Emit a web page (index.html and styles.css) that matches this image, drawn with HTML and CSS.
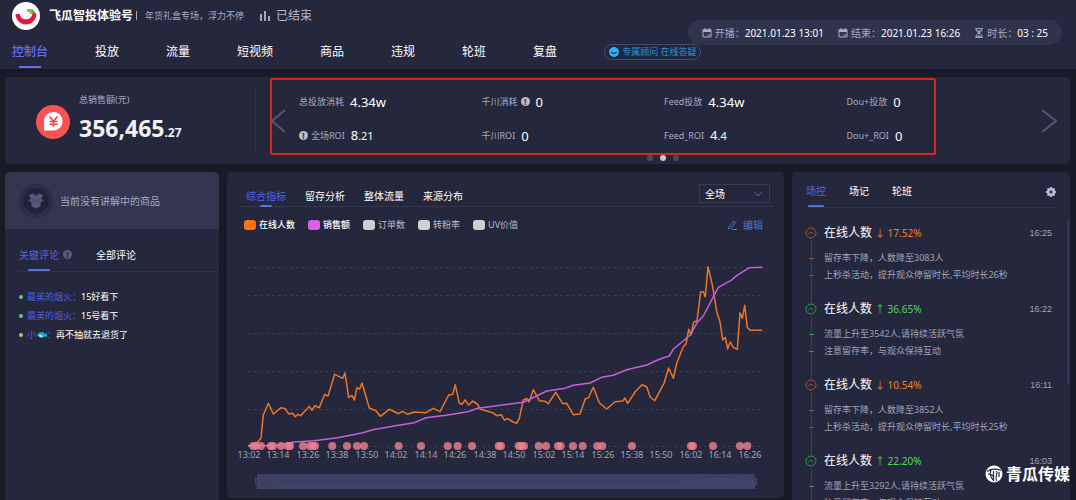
FILE: index.html
```html
<!DOCTYPE html>
<html lang="zh-CN">
<head>
<meta charset="utf-8">
<meta name="viewport" content="width=device-width, initial-scale=1">
<title>飞瓜智投体验号</title>
<link rel="stylesheet" href="styles.css">
</head>
<body>
<header class="header">
  <div class="brand">
    <svg class="logo" viewBox="0 0 28 28" aria-hidden="true">
      <circle cx="14" cy="14" r="14" fill="#fff"/>
      <path d="M3.500 12h4.200c1 4 3.400 5.300 6.300 5.300s5.300-1.300 6.300-5.300h4.200c-.4 6.300-4.700 10.500-10.500 10.500S3.900 18.300 3.500 12z" fill="#e5173f"/>
      <path d="M15 7h5.500l1.200 1.500V12H18c0-1.500-1-2.200-3-2.200z" fill="#86c440"/>
      <path d="M20.500 8l4 4h-4z" fill="#35963c"/>
    </svg>
    <h1 class="brand-name">飞瓜智投体验号</h1>
    <span class="brand-rule"></span>
    <span class="brand-sub">年货礼盒专场，浮力不停</span>
    <svg class="bars" viewBox="0 0 10 10" aria-hidden="true"><path d="M1 3v7M5 0v10M9 5v5" stroke="#b4b6cb" stroke-width="1.800"/></svg>
    <span class="status">已结束</span>
  </div>
  <nav class="nav">
    <a class="nav-link is-active" href="#">控制台</a>
    <a class="nav-link" href="#">投放</a>
    <a class="nav-link" href="#">流量</a>
    <a class="nav-link" href="#">短视频</a>
    <a class="nav-link" href="#">商品</a>
    <a class="nav-link" href="#">违规</a>
    <a class="nav-link" href="#">轮班</a>
    <a class="nav-link" href="#">复盘</a>
    <button class="advisor" type="button">
      <svg class="advisor-icon" viewBox="0 0 10 10" aria-hidden="true"><circle cx="5" cy="5" r="5" fill="#35aef2"/><path d="M2.500 5q2.500 3 5 0" fill="none" stroke="#17395e" stroke-width="1.200"/></svg>
      专属顾问 在线答疑
    </button>
  </nav>
  <div class="session">
    <span class="session-item">
      <svg class="mini" viewBox="0 0 10 10" aria-hidden="true"><path d="M1 4v5h8V4M2.800 0v2M7.200 0v2M5.500 7H8" fill="none" stroke="#a9abc4"/><path d="M.5 1.200h9v2.800h-9z" fill="#a9abc4"/></svg>
      <span>开播：</span><time class="session-value">2021.01.23 13:01</time>
    </span>
    <span class="session-item">
      <svg class="mini" viewBox="0 0 10 10" aria-hidden="true"><path d="M1 4v5h8V4M2.800 0v2M7.200 0v2M5.500 7H8" fill="none" stroke="#a9abc4"/><path d="M.5 1.200h9v2.800h-9z" fill="#a9abc4"/></svg>
      <span>结束：</span><time class="session-value">2021.01.23 16:26</time>
    </span>
    <span class="session-item">
      <svg class="mini" viewBox="0 0 10 10" aria-hidden="true"><path d="M1 .6h8M1 9.400h8M2.300 1v2L5 5l2.700-2V1M2.300 9V7L5 5l2.700 2v2" fill="none" stroke="#a9abc4"/><path d="M3 2.500h4L5 4.500zM3 9l2-2 2 2z" fill="#a9abc4"/></svg>
      <span>时长：</span><span class="session-value">03 : 25</span>
    </span>
  </div>
</header>

<section class="hero">
  <div class="sales">
    <svg class="coin" viewBox="0 0 34 34" aria-hidden="true">
      <circle cx="17" cy="17" r="17" fill="#fb5153"/>
      <path d="M8 25.500V17a9.300 9.300 0 1 1 9.300 8.500z" fill="#fff"/>
      <path d="M13.500 11.500l4 4.800 4-4.800M17.500 16v6M13.500 16.500h8M13.500 19.200h8" fill="none" stroke="#e8474a" stroke-width="1.500"/>
    </svg>
    <div>
      <div class="sales-label">总销售额(元)</div>
      <div class="sales-value">356,465<span class="sales-cents">.27</span></div>
    </div>
  </div>
  <div class="carousel">
    <button class="arrow" type="button" aria-label="上一页"><svg viewBox="0 0 16 24"><path d="M14 1L1 12l13 11"/></svg></button>
    <dl class="metrics">
      <div class="metric"><dt>总投放消耗</dt><dd>4.34w</dd></div>
      <div class="metric"><dt>千川消耗 <i class="info">!</i></dt><dd>0</dd></div>
      <div class="metric"><dt>Feed投放</dt><dd>4.34w</dd></div>
      <div class="metric"><dt>Dou+投放</dt><dd>0</dd></div>
      <div class="metric"><dt><i class="info">!</i> 全场ROI</dt><dd>8<small>.21</small></dd></div>
      <div class="metric"><dt>千川ROI</dt><dd>0</dd></div>
      <div class="metric"><dt>Feed_ROI</dt><dd>4<small>.4</small></dd></div>
      <div class="metric"><dt>Dou+_ROI</dt><dd>0</dd></div>
    </dl>
    <button class="arrow" type="button" aria-label="下一页"><svg viewBox="0 0 16 24"><path d="M1 1l14 11L1 23"/></svg></button>
    <div class="highlight"></div>
    <div class="dots"><span></span><span class="is-on"></span><span></span></div>
  </div>
</section>

<main class="main">
  <section class="panel comments">
    <div class="product">
      <svg class="product-icon" viewBox="0 0 34 34" aria-hidden="true">
        <circle cx="17" cy="17" r="17" fill="#2b2d42"/><circle cx="17" cy="17" r="12.500" fill="#1f2134"/>
        <path d="M9.500 11l5-1.500L17 12l2.500-2.500 5 1.500L22 14.500l3 2-3.500 2v4L17 24.500l-4.500-2v-4l-3.500-2 3-2z" fill="#55587a"/>
        <path d="M12 14.500l5 2 5-2M12.500 18.500l4.500-2 4.500 2" fill="none" stroke="#454869"/>
      </svg>
      <span>当前没有讲解中的商品</span>
    </div>
    <div class="comment-tabs">
      <button class="tab is-active" type="button">关键评论</button><i class="info is-dim">!</i>
      <button class="tab tab-all" type="button">全部评论</button>
    </div>
    <ul class="comment-list">
      <li><b class="user">最美的烟火：</b><span>15好看下</span></li>
      <li><b class="user">最美的烟火：</b><span>15号看下</span></li>
      <li class="is-gold"><b class="user">小<svg class="fish" viewBox="0 0 10 8" aria-hidden="true"><path d="M0 4Q3 0 6.500 1.500L8 3l2-1v4L8 5.500Q4 9 0 4z" fill="#19a9dc"/><path d="M1 4.500q2.500 2.500 5 .5l-2-1z" fill="#c2f0fb"/></svg>：</b><span>再不抽就去退货了</span></li>
    </ul>
  </section>

  <section class="panel trend">
    <div class="trend-head">
      <div class="trend-tabs">
        <button class="tab is-active" type="button">综合指标</button>
        <button class="tab" type="button">留存分析</button>
        <button class="tab" type="button">整体流量</button>
        <button class="tab" type="button">来源分布</button>
      </div>
      <select class="range" aria-label="时段"><option>全场</option></select>
    </div>
    <div class="legend">
      <span class="key is-orange">在线人数</span>
      <span class="key is-purple">销售额</span>
      <span class="key">订单数</span>
      <span class="key">转粉率</span>
      <span class="key">UV价值</span>
      <button class="edit" type="button"><svg viewBox="0 0 10 10" aria-hidden="true"><path d="M1.500 7.500L6.800 1.200l1.800 1.500L3.500 8.500l-2.300.3zM5 9.500h5" fill="none" stroke="#4577d6"/></svg>编辑</button>
    </div>
    <svg class="chart" viewBox="238 240 536 252" role="img" aria-label="在线人数与销售额走势">
      <path class="grid" d="M248 267.500h514M248 295.500h514M248 333.500h514M248 371.500h514M248 409.500h514M248 446.500h514"/>
      <polyline class="line is-online" points="248,446 257.7,442 261,438.3 263.3,415 268.3,403.3 273.3,414 281,407.7 285.3,408.7 288.7,414 292.7,413.3 295.3,416.7 298,414.3 300.7,415.7 309.3,406.3 312,410.3 314.7,405.7 319.3,407.7 324.7,394.3 328,396 334.7,374.3 342.7,378.3 345,373 348.7,397.3 352,395.3 354.3,400 357,387.7 359.7,389 362,383 369.3,408 376,410.7 380.3,416.3 389.3,409.3 398.7,413.7 402.7,411.3 407.7,414.3 414.3,412 426,412.7 433.3,408.3 440,411.7 448.7,395 452.7,394.3 455.3,384.7 459.3,403.3 462,404.3 465,400 468.7,405 472.7,401 477.7,404.3 480,409 492.7,412.7 496.7,415.7 501.3,414.7 504.3,420 507.7,418.7 513,422 516.7,423.3 519.3,418.3 523.3,400 526.7,398.3 529,402 533.3,389.7 539.3,400.7 545,401.3 548.3,403.7 555.7,392.3 562.7,403.7 566.7,403.3 573.3,414.7 580,414 585.3,398.7 588.3,398 593.3,387.3 599.3,402.7 606.7,409 615,401.7 622.7,401 625,398 627.7,403.3 635,392 642,384.7 646.7,386.7 650,396.7 654.7,400.7 664,383.3 668.7,368 673.3,378.3 676.7,363.3 683.3,346.7 686,344 688.7,329.3 691,335 693.7,322 697,321 700.7,291.7 703.3,291.7 705.3,296.7 708,266.7 712.7,286.7 716.7,311.7 720,321.7 722.7,340 725.3,337.3 727.7,349 730.3,342 733.3,347.3 737.3,349.3 740,312.7 742.3,318.3 744.7,305.3 747.3,327.3 750,330.3 762.3,330.3"/>
      <polyline class="line is-sales" points="248,446 276,445.5 294,442 314,440.7 337.7,437.7 362.7,432.7 372.7,429.7 392.7,426.3 414,422.7 426,417.7 446,415.3 467.7,411.7 477.7,408.3 516,403.3 523.3,402.3 535,396.7 546.7,391 565,388.3 573.3,385.3 590,383 601.7,377.3 613.3,375.3 626.7,369.7 646.7,365 660,359 669.3,356 673.3,349.3 690,335.3 696.7,323.3 703.3,316 718.3,287.3 730.7,280.7 736.7,275.7 749.3,267.7 762.3,267.3"/>
      <g class="marks">
        <circle cx="253.3" cy="446" r="4"/><circle cx="256" cy="446" r="4"/><circle cx="261" cy="446" r="4"/><circle cx="270.7" cy="446" r="4"/><circle cx="273" cy="446" r="4"/><circle cx="281" cy="446" r="4"/><circle cx="288" cy="446" r="4"/><circle cx="290" cy="446" r="4"/><circle cx="303" cy="446" r="4"/><circle cx="310" cy="446" r="4"/><circle cx="312.7" cy="446" r="4"/><circle cx="315" cy="446" r="4"/><circle cx="332.3" cy="446" r="4"/><circle cx="347" cy="446" r="4"/><circle cx="357" cy="446" r="4"/><circle cx="364" cy="446" r="4"/><circle cx="398.7" cy="446" r="4"/><circle cx="421" cy="446" r="4"/><circle cx="447.7" cy="446" r="4"/><circle cx="457.7" cy="446" r="4"/><circle cx="472" cy="446" r="4"/><circle cx="498.7" cy="446" r="4"/><circle cx="501" cy="446" r="4"/><circle cx="518.7" cy="446" r="4"/><circle cx="521.3" cy="446" r="4"/><circle cx="524" cy="446" r="4"/><circle cx="538.7" cy="446" r="4"/><circle cx="546" cy="446" r="4"/><circle cx="558" cy="446" r="4"/><circle cx="560.7" cy="446" r="4"/><circle cx="573" cy="446" r="4"/><circle cx="582.7" cy="446" r="4"/><circle cx="597.3" cy="446" r="4"/><circle cx="602.3" cy="446" r="4"/><circle cx="632" cy="446" r="4"/><circle cx="691" cy="446" r="4"/><circle cx="693" cy="446" r="4"/><circle cx="713" cy="446" r="4"/><circle cx="740" cy="446" r="4"/><circle cx="747.3" cy="446" r="4"/>
      </g>
      <g class="axis">
        <text x="249" y="458">13:02</text><text x="278" y="458">13:14</text><text x="308" y="458">13:26</text><text x="337" y="458">13:38</text><text x="367" y="458">13:50</text><text x="396" y="458">14:02</text><text x="426" y="458">14:14</text><text x="455" y="458">14:26</text><text x="485" y="458">14:38</text><text x="514" y="458">14:50</text><text x="544" y="458">15:02</text><text x="573" y="458">15:14</text><text x="603" y="458">15:26</text><text x="632" y="458">15:38</text><text x="661" y="458">15:50</text><text x="691" y="458">16:02</text><text x="720" y="458">16:14</text><text x="750" y="458">16:26</text>
      </g>
      <rect x="257" y="474" width="498" height="15" fill="#3c4064"/>
      <path d="M257 487q90-2 150-2t180 0 90-4l40-4 38 4v8H257z" fill="#3f446b"/>
      <path d="M255.500 478h3v6l-1.500 2-1.500-2zM753.500 478h3v6l-1.500 2-1.500-2z" fill="#343858" stroke="#50557d" stroke-width=".6"/>
    </svg>
  </section>

  <section class="panel control">
    <div class="control-tabs">
      <button class="tab is-active" type="button">场控</button>
      <button class="tab" type="button">场记</button>
      <button class="tab" type="button">轮班</button>
      <button class="gear" type="button" aria-label="设置"><svg viewBox="0 0 10 10"><circle cx="5" cy="5" r="2.800" fill="none" stroke="#b9bbd6" stroke-width="2.600"/><path d="M5 0v2M5 8v2M0 5h2M8 5h2M1.500 1.500l1.400 1.400M7.100 7.100l1.400 1.400M1.500 8.500l1.400-1.400M7.100 2.900l1.400-1.400" stroke="#b9bbd6" stroke-width="1.800"/></svg></button>
    </div>
    <ol class="events">
      <li class="event is-down">
        <h3 class="event-head"><svg class="bullet" viewBox="0 0 12 12" aria-hidden="true"><circle cx="6" cy="6" r="5"/><path d="M3.500 7L6 5l2.500 2"/></svg>在线人数<span class="delta">↓ 17.52%</span><time>16:25</time></h3>
        <p>留存率下降，人数降至3083人</p><p>上秒杀活动，提升观众停留时长,平均时长26秒</p>
      </li>
      <li class="event is-up">
        <h3 class="event-head"><svg class="bullet" viewBox="0 0 12 12" aria-hidden="true"><circle cx="6" cy="6" r="5"/><path d="M3.500 7L6 5l2.500 2"/></svg>在线人数<span class="delta">↑ 36.65%</span><time>16:22</time></h3>
        <p>流量上升至3542人,请持续活跃气氛</p><p class="is-muted">注意留存率，与观众保持互动</p>
      </li>
      <li class="event is-down">
        <h3 class="event-head"><svg class="bullet" viewBox="0 0 12 12" aria-hidden="true"><circle cx="6" cy="6" r="5"/><path d="M3.500 7L6 5l2.500 2"/></svg>在线人数<span class="delta">↓ 10.54%</span><time>16:11</time></h3>
        <p>留存率下降，人数降至3852人</p><p>上秒杀活动，提升观众停留时长,平均时长25秒</p>
      </li>
      <li class="event is-up">
        <h3 class="event-head"><svg class="bullet" viewBox="0 0 12 12" aria-hidden="true"><circle cx="6" cy="6" r="5"/><path d="M3.500 7L6 5l2.500 2"/></svg>在线人数<span class="delta">↑ 22.20%</span><time>16:03</time></h3>
        <p>流量上升至3292人,请持续活跃气氛</p><p class="is-muted">注意留存率，与观众保持互动</p>
      </li>
    </ol>
    <span class="scrollbar"></span>
  </section>
</main>

<div class="watermark">
  <svg viewBox="0 0 18 18" aria-hidden="true"><circle cx="9" cy="9" r="8.500" fill="#fff"/><path d="M2 6.500q6-4 14-1M6 5q-2 5 2 10M8.500 6v10M11.500 6q1 2 0 4t0 6M3 9q4 0 6 3M14 7v5" fill="none" stroke="#25283c" stroke-width="1.200"/></svg>
  青瓜传媒
</div>
</body>
</html>
```
FILE: styles.css
```css
* { box-sizing: border-box; }

body {
  margin: 0;
  height: 100vh;
  display: flex;
  flex-direction: column;
  gap: 8px;
  overflow: hidden;
  position: relative;
  background: #181a27;
  color: #fff;
  font: 10px/16px "Noto Sans", "Noto Sans CJK SC", sans-serif;
}

button, select {
  margin: 0;
  padding: 0;
  border: 0;
  background: none;
  color: inherit;
  font: inherit;
}

h1, h3, p, ul, ol, dl, dd { margin: 0; padding: 0; }
ul, ol { list-style: none; }
svg { display: block; flex: none; }

/* Header */
.header {
  position: relative;
  flex: none;
  height: 69px;
  display: flex;
  flex-direction: column;
  justify-content: space-between;
  background: #25283c;
}
.brand { display: flex; align-items: center; padding: 1px 0 0 12px; height: 30px; }
.logo { width: 28px; height: 28px; }
.brand-name { margin-left: 9px; font-size: 12px; font-weight: 700; }
.brand-rule { width: 1px; height: 9px; margin: 0 8px 0 3px; background: #a9abc4; }
.brand-sub { font-size: 9px; color: #a9abc4; }
.bars { width: 10px; height: 10px; margin: 0 6px 0 16px; }
.status { font-size: 12px; color: #b4b6cb; }

.nav { display: flex; gap: 47px; padding-left: 12px; height: 34px; align-items: flex-start; }
.nav-link {
  position: relative;
  height: 34px;
  line-height: 34px;
  font-size: 12px;
  color: #fff;
  text-decoration: none;
}
.nav-link.is-active { color: #666cf0; font-weight: 500; }
.nav-link.is-active::after {
  content: "";
  position: absolute;
  left: 7px;
  right: 7px;
  bottom: 1px;
  height: 2px;
  background: #666cf0;
}
.advisor {
  display: flex;
  align-items: center;
  gap: 3px;
  margin-top: 9px;
  height: 16px;
  padding: 0 4px;
  border: 1px solid #484c66;
  border-radius: 8px;
  background: #1c2740;
  color: #358fd0;
  font-size: 9px;
  white-space: nowrap;
}
.advisor-icon { width: 10px; height: 10px; }

.session {
  position: absolute;
  top: 20px;
  right: 14px;
  height: 25px;
  display: flex;
  align-items: center;
  gap: 14px;
  padding: 0 14px;
  border-radius: 13px;
  background: #30334c;
  color: #a9abc4;
  font-size: 10px;
}
.session-item { display: flex; align-items: center; white-space: nowrap; }
.mini { width: 10px; height: 10px; margin-right: 3px; }
.session-value { color: #fff; }

/* Overview strip */
.hero {
  flex: none;
  display: flex;
  height: 87px;
  margin: 0 6px 0 5px;
  border-radius: 5px;
  background: #25283c;
}
.sales {
  flex: none;
  width: 251px;
  display: flex;
  gap: 9px;
  padding: 15px 0 0 31px;
  background: linear-gradient(#2e3147, #2e3147) right center / 1px 64px no-repeat;
}
.coin { width: 34px; height: 34px; margin-top: 13px; }
.sales-label { font-size: 9px; color: #a9abc4; }
.sales-value { margin-top: 6px; font-size: 23px; line-height: 28px; font-weight: 700; color: #f0f0f5; }
.sales-cents { font-size: 12px; }

.carousel {
  position: relative;
  flex: 1;
  display: flex;
  align-items: center;
  gap: 12px;
  padding: 0 13px 0 15px;
}
.arrow svg { width: 16px; height: 24px; fill: none; stroke: #555870; stroke-width: 2; }
.metrics {
  flex: 1;
  display: grid;
  grid-template-columns: repeat(4, 1fr);
  row-gap: 14px;
  padding-bottom: 4px;
}
.metric { display: flex; align-items: center; gap: 6px; height: 20px; }
.metric dt { display: flex; align-items: center; gap: 3px; font-size: 9px; color: #a9abc4; }
.metric dd { font-size: 13px; line-height: 20px; }
.metric small { font-size: 11px; }

.info {
  width: 9px;
  height: 9px;
  border-radius: 50%;
  background: #b9bbd0;
  color: #25283c;
  font: 700 8px/9px "Noto Sans", sans-serif;
  text-align: center;
}
.info.is-dim { background: #565978; }

.highlight {
  position: absolute;
  top: 1px;
  left: 14px;
  right: 134px;
  height: 77px;
  border: 2px solid #d9251f;
  border-radius: 2px;
  pointer-events: none;
}
.dots {
  position: absolute;
  left: 0;
  right: 0;
  bottom: 3px;
  display: flex;
  justify-content: center;
  gap: 7px;
}
.dots span { width: 6px; height: 6px; border-radius: 50%; background: #484b62; }
.dots .is-on { background: #c6c8d8; }

/* Columns */
.main {
  flex: 1;
  min-height: 0;
  display: grid;
  grid-template-columns: 214px minmax(0, 1fr) 278px;
  grid-template-rows: minmax(0, 1fr);
  gap: 8px;
  margin: 0 6px 0 5px;
}
.panel { border-radius: 5px 5px 0 0; background: #25283c; overflow: hidden; }
.tab { position: relative; white-space: nowrap; }
.tab.is-active { color: #5561e8; }
.tab.is-active::after {
  content: "";
  position: absolute;
  height: 2px;
  bottom: 0;
  border-radius: 1px;
  background: #5270e8;
}

/* Comments */
.product {
  display: flex;
  align-items: center;
  gap: 7px;
  height: 57px;
  padding-left: 14px;
  background: #33364e;
  color: #a9abc4;
}
.product-icon { width: 34px; height: 34px; }
.comment-tabs {
  display: flex;
  align-items: center;
  height: 43px;
  margin-left: 14px;
  padding-top: 9px;
  border-bottom: 1px solid #2f3248;
}
.comment-tabs .tab { height: 33px; line-height: 34px; }
.comment-tabs .tab.is-active::after { left: 9px; right: 9px; }
.comment-tabs .info { margin-left: 4px; }
.comment-tabs .tab-all { margin-left: 24px; }
.comment-list { padding: 15px 0 0 14px; font-size: 9px; }
.comment-list li { display: flex; align-items: center; height: 19px; }
.comment-list li::before {
  content: "";
  width: 4px;
  height: 4px;
  margin-right: 4px;
  border-radius: 50%;
  background: #62c4a0;
}
.comment-list .is-gold::before { background: #e0b36a; }
.user { display: flex; align-items: center; font-weight: 400; color: #4f5ce6; }
.fish { width: 10px; height: 8px; margin-left: 1px; }

/* Trend */
.trend { padding: 12px 10px 0 11px; margin-bottom: 2px; border-radius: 5px; }
.trend-head {
  display: flex;
  justify-content: space-between;
  align-items: flex-start;
  height: 23px;
  padding: 0 4px 0 8px;
  border-bottom: 1px solid #33364d;
}
.trend-tabs { display: flex; gap: 19px; }
.trend-tabs .tab { height: 23px; line-height: 22px; }
.trend-tabs .tab.is-active::after { left: 14px; right: 14px; }
.range {
  appearance: none;
  width: 71px;
  height: 19px;
  padding: 0 5px;
  border: 1px solid #383b52;
  color: #fff;
  background: url("data:image/svg+xml,%3Csvg xmlns='http://www.w3.org/2000/svg' viewBox='0 0 8 6'%3E%3Cpath d='M0 .5l4 4.500 4-4.500' fill='none' stroke='%23666980'/%3E%3C/svg%3E") right 7px center / 8px 6px no-repeat;
}
.legend { display: flex; align-items: center; gap: 13px; height: 33px; padding: 3px 11px 0 6px; font-size: 9px; color: #b9bbcc; }
.key { display: flex; align-items: center; gap: 3px; white-space: nowrap; }
.key::before { content: ""; width: 12px; height: 10px; border-radius: 3px; background: #cfcfcf; }
.key.is-orange, .key.is-purple { color: #fff; font-weight: 500; }
.key.is-orange::before { background: #ff7315; }
.key.is-purple::before { background: #d95fe6; }
.edit { display: flex; align-items: center; gap: 6px; margin-left: auto; font-size: 10px; color: #4577d6; }
.edit svg { width: 10px; height: 10px; }
.chart { width: 100%; height: auto; }
.grid { stroke: #383b50; stroke-dasharray: 3 3; fill: none; }
.line { fill: none; stroke-width: 1.5; stroke-linejoin: round; }
.line.is-online { stroke: #ee7526; }
.line.is-sales { stroke: #c65fd8; }
.marks { fill: #f08090; fill-opacity: .8; }
.axis { fill: #a3a5b8; font-size: 9px; text-anchor: middle; }

/* Control feed */
.control { position: relative; display: flex; flex-direction: column; }
.control-tabs {
  flex: none;
  display: flex;
  align-items: center;
  gap: 23px;
  height: 36px;
  margin: 0 14px;
  padding-top: 4px;
  border-bottom: 1px solid #2f3248;
}
.control-tabs .tab { height: 31px; line-height: 31px; }
.control-tabs .tab.is-active::after { left: 2px; right: 2px; }
.gear { margin-left: auto; }
.gear svg { width: 10px; height: 10px; }
.events { padding: 17px 18px 0 14px; }
.event { position: relative; height: 76px; padding-left: 18px; color: #a0a2b8; font-size: 9px; }
.event::before {
  content: "";
  position: absolute;
  top: 15px;
  left: 5px;
  width: 1px;
  height: 64px;
  background: #3b3e56;
}
.event-head {
  position: relative;
  display: flex;
  align-items: center;
  height: 16px;
  margin-bottom: 8px;
  font-size: 12px;
  font-weight: 400;
  color: #fff;
}
.event-head time { margin-left: auto; font: 9px/16px "Liberation Sans", sans-serif; color: #a0a2b8; }
.bullet {
  position: absolute;
  top: 2px;
  left: -19px;
  width: 12px;
  height: 12px;
  fill: none;
  stroke: currentColor;
  stroke-width: 1;
}
.is-down .bullet { color: #a5522c; }
.is-up .bullet { color: #2d9148; }
.delta { margin-left: 3px; font-size: 10px; }
.is-down .delta { color: #f08020; }
.is-up .delta { color: #58d468; }
.event p { position: relative; height: 17px; line-height: 17px; white-space: nowrap; }
.event p::before {
  content: "";
  position: absolute;
  top: 9px;
  left: -15px;
  width: 5px;
  height: 1px;
  background: #96502f;
}
.is-up p::before { background: #38a04d; }
.event .is-muted::before { background: #666980; }
.scrollbar { position: absolute; top: 49px; right: 0; width: 3px; height: 163px; background: #33365a; }

.watermark {
  position: absolute;
  right: 6px;
  bottom: 15px;
  display: flex;
  align-items: center;
  gap: 3px;
  font-size: 16px;
  line-height: 22px;
  font-weight: 700;
}
.watermark svg { width: 18px; height: 18px; }
```
